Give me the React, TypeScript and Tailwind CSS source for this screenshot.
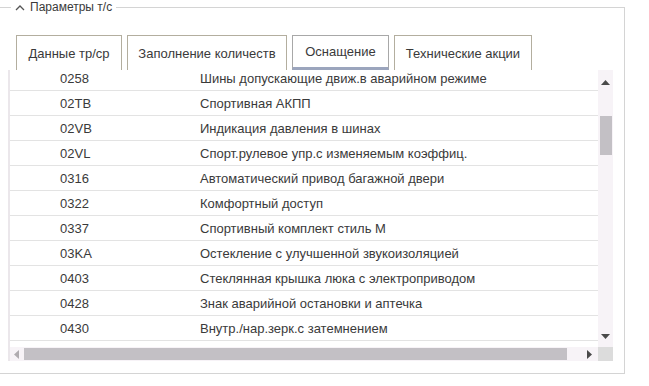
import React from 'react';

const rows: [string, string][] = [
  ['0258', 'Шины допускающие движ.в аварийном режиме'],
  ['02TB', 'Спортивная АКПП'],
  ['02VB', 'Индикация давления в шинах'],
  ['02VL', 'Спорт.рулевое упр.с изменяемым коэффиц.'],
  ['0316', 'Автоматический привод багажной двери'],
  ['0322', 'Комфортный доступ'],
  ['0337', 'Спортивный комплект стиль M'],
  ['03KA', 'Остекление с улучшенной звукоизоляцией'],
  ['0403', 'Стеклянная крышка люка с электроприводом'],
  ['0428', 'Знак аварийной остановки и аптечка'],
  ['0430', 'Внутр./нар.зерк.с затемнением'],
];

const tabs = [
  { label: 'Данные тр/ср', w: 'w-[106px]' },
  { label: 'Заполнение количеств', w: 'w-[160px]' },
  { label: 'Оснащение', w: 'w-[97px]', active: true },
  { label: 'Технические акции', w: 'w-[138px]' },
];

const App: React.FC = () => {
  return (
    <div className="w-[649px] h-[386px] bg-white overflow-hidden text-[#3a3a3a] font-['Liberation_Sans',Arial,sans-serif]">
      <fieldset className="ml-[-1px] w-[626px] h-[374px] border border-[#d4d4d4] pb-0">
        <legend className="ml-[11px] px-[4px] h-[14px] text-[12px] leading-[14px] flex items-center gap-[5px]">
          <svg width="10" height="7" viewBox="0 0 10 7" className="mt-[1px]">
            <path d="M1 6 L5 2 L9 6" fill="none" stroke="#555" strokeWidth="1.3" />
          </svg>
          <span>Параметры т/с</span>
        </legend>

        <div className="flex pl-[16px] mt-[21px] gap-[5px]">
          {tabs.map((t) => (
            <div
              key={t.label}
              className={`${t.w} h-[35px] pt-[1px] flex items-center justify-center text-[13px] bg-white border-x border-t ${
                t.active ? 'border-[#a8a8a8] border-b-[3px] border-b-[#9ba5bd]' : 'border-[#b3ae9f]'
              }`}
            >
              {t.label}
            </div>
          ))}
        </div>

        <div className="ml-[8px] w-[605px] h-[291px] border-l-2 border-[#ebe7eb] flex flex-col">
          <div className="flex h-[277px]">
            <div className="flex-1 overflow-hidden">
              <div className="mt-[-4px]">
                {rows.map(([code, name]) => (
                  <div key={code} className="flex h-[25px] pt-[2px] items-center border-b border-[#e3e3e3] text-[13px] whitespace-nowrap">
                    <div className="w-[190px] pl-[50px]">{code}</div>
                    <div>{name}</div>
                  </div>
                ))}
              </div>
            </div>
            <div className="w-[15px] bg-[#f7f3f7] flex flex-col items-center">
              <svg width="9" height="5" viewBox="0 0 9 5" className="mt-[10px]">
                <path d="M0 5 L4.5 0 L9 5 Z" fill="#4a4a4a" />
              </svg>
              <div className="w-[12px] h-[39px] bg-[#c3c0c5] mt-[31px]" />
              <div className="flex-1" />
              <svg width="9" height="5" viewBox="0 0 9 5" className="mb-[8px]">
                <path d="M0 0 L9 0 L4.5 5 Z" fill="#4a4a4a" />
              </svg>
            </div>
          </div>
          <div className="flex h-[14px]">
            <div className="flex-1 bg-[#f7f3f7] flex items-center">
              <svg width="5" height="9" viewBox="0 0 5 9" className="ml-[4px]">
                <path d="M5 0 L0 4.5 L5 9 Z" fill="#b0acb0" />
              </svg>
              <div className="w-[543px] h-[12px] bg-[#c3c0c5] ml-[5px]" />
              <div className="flex-1" />
              <svg width="5" height="9" viewBox="0 0 5 9" className="mr-[6px]">
                <path d="M0 0 L5 4.5 L0 9 Z" fill="#4a4a4a" />
              </svg>
            </div>
            <div className="w-[15px] bg-[#dcdcdc]" />
          </div>
        </div>
      </fieldset>
    </div>
  );
};

export default App;
